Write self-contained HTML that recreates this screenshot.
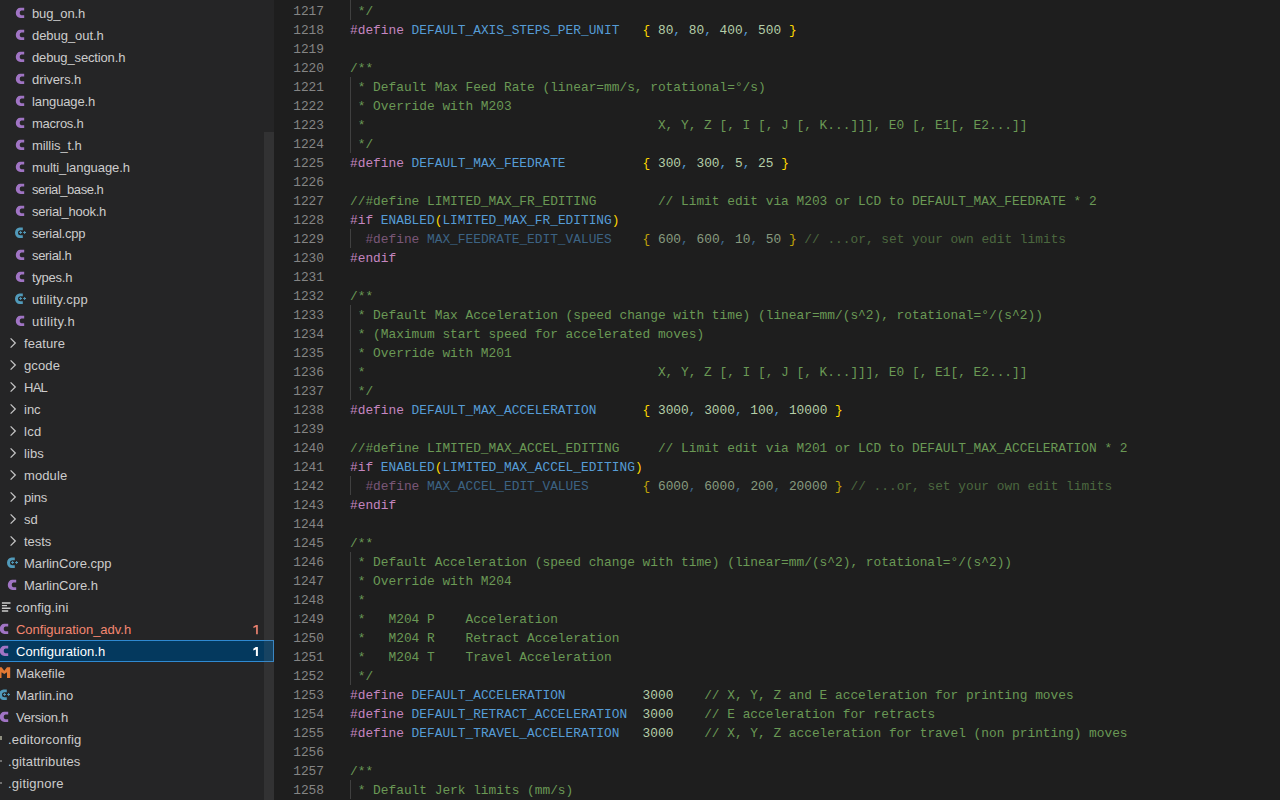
<!DOCTYPE html>
<html><head><meta charset="utf-8"><style>
*{margin:0;padding:0;box-sizing:border-box}
html,body{width:1280px;height:800px;overflow:hidden;background:#1e1e1e}
#side{position:absolute;left:0;top:0;width:274px;height:800px;background:#252526;overflow:hidden}
.fn{position:absolute;height:22px;line-height:22px;font-family:"Liberation Sans",sans-serif;font-size:13px;color:#cccccc;white-space:pre}
.fn.err{color:#f48771}
.fn.selt{color:#ffffff}
.sel{position:absolute;left:0;width:274px;height:22px;background:#04395e;border:1px solid #2f8ad2;border-left:none}
.badge{position:absolute;left:248px;width:14px;height:22px;line-height:22px;text-align:center;font-family:"Liberation Sans",sans-serif;font-size:12px}
.ic{position:absolute}
.ic-c{position:absolute;width:12px;height:22px;line-height:22px;font-family:"Liberation Sans",sans-serif;font-weight:bold;font-size:14px;color:#a074c4}
.ic-m{position:absolute;width:12px;height:22px;line-height:22px;font-family:"Liberation Sans",sans-serif;font-weight:bold;font-size:13px;color:#e37933}
#thumb{position:absolute;left:264px;top:132px;width:10px;height:668px;background:rgba(121,121,121,0.17)}
#ed{position:absolute;left:274px;top:0;width:1006px;height:800px;background:#1e1e1e;overflow:hidden}
.ln{position:absolute;left:0;width:50px;height:19px;line-height:19px;padding-top:1px;text-align:right;font-family:"Liberation Mono",monospace;font-size:12.84px;color:#858585;white-space:pre}
.cl{position:absolute;left:76px;height:19px;line-height:19px;padding-top:1px;font-family:"Liberation Mono",monospace;font-size:12.84px;color:#d4d4d4;white-space:pre}
.ig{position:absolute;left:76px;width:1px;height:19px;background:#404040}
.pp{color:#c586c0}.mac{color:#569cd6}.num{color:#b5cea8}.br{color:#ffd700}.cm{color:#6a9955}.tx{color:#d4d4d4}.co{color:#569cd6}
.ppd{color:#c586c0;opacity:.55}.macd{color:#569cd6;opacity:.55}.numd{color:#b5cea8;opacity:.7}.brd{color:#ffd700;opacity:.72}.cod{color:#569cd6;opacity:.6}.cmd{color:#6a9955;opacity:.6}
</style></head>
<body>
<div id="side">
<svg class="ic" style="left:14px;top:2px" width="14" height="22" viewBox="0 0 14 22"><path d="M10.2 5.8 H6.4 A4.6 5.1 0 0 0 6.4 16 H10.2 V13.2 H7.4 A2.4 2.4 0 0 1 7.4 8.6 H10.2 Z" fill="#a074c4"/></svg><div class="fn" style="left:32px;top:3px;letter-spacing:-0.143px">bug_on.h</div><svg class="ic" style="left:14px;top:24px" width="14" height="22" viewBox="0 0 14 22"><path d="M10.2 5.8 H6.4 A4.6 5.1 0 0 0 6.4 16 H10.2 V13.2 H7.4 A2.4 2.4 0 0 1 7.4 8.6 H10.2 Z" fill="#a074c4"/></svg><div class="fn" style="left:32px;top:25px;letter-spacing:-0.050px">debug_out.h</div><svg class="ic" style="left:14px;top:46px" width="14" height="22" viewBox="0 0 14 22"><path d="M10.2 5.8 H6.4 A4.6 5.1 0 0 0 6.4 16 H10.2 V13.2 H7.4 A2.4 2.4 0 0 1 7.4 8.6 H10.2 Z" fill="#a074c4"/></svg><div class="fn" style="left:32px;top:47px;letter-spacing:-0.143px">debug_section.h</div><svg class="ic" style="left:14px;top:68px" width="14" height="22" viewBox="0 0 14 22"><path d="M10.2 5.8 H6.4 A4.6 5.1 0 0 0 6.4 16 H10.2 V13.2 H7.4 A2.4 2.4 0 0 1 7.4 8.6 H10.2 Z" fill="#a074c4"/></svg><div class="fn" style="left:32px;top:69px;letter-spacing:-0.062px">drivers.h</div><svg class="ic" style="left:14px;top:90px" width="14" height="22" viewBox="0 0 14 22"><path d="M10.2 5.8 H6.4 A4.6 5.1 0 0 0 6.4 16 H10.2 V13.2 H7.4 A2.4 2.4 0 0 1 7.4 8.6 H10.2 Z" fill="#a074c4"/></svg><div class="fn" style="left:32px;top:91px;letter-spacing:-0.111px">language.h</div><svg class="ic" style="left:14px;top:112px" width="14" height="22" viewBox="0 0 14 22"><path d="M10.2 5.8 H6.4 A4.6 5.1 0 0 0 6.4 16 H10.2 V13.2 H7.4 A2.4 2.4 0 0 1 7.4 8.6 H10.2 Z" fill="#a074c4"/></svg><div class="fn" style="left:32px;top:113px;letter-spacing:-0.250px">macros.h</div><svg class="ic" style="left:14px;top:134px" width="14" height="22" viewBox="0 0 14 22"><path d="M10.2 5.8 H6.4 A4.6 5.1 0 0 0 6.4 16 H10.2 V13.2 H7.4 A2.4 2.4 0 0 1 7.4 8.6 H10.2 Z" fill="#a074c4"/></svg><div class="fn" style="left:32px;top:135px;letter-spacing:-0.083px">millis_t.h</div><svg class="ic" style="left:14px;top:156px" width="14" height="22" viewBox="0 0 14 22"><path d="M10.2 5.8 H6.4 A4.6 5.1 0 0 0 6.4 16 H10.2 V13.2 H7.4 A2.4 2.4 0 0 1 7.4 8.6 H10.2 Z" fill="#a074c4"/></svg><div class="fn" style="left:32px;top:157px;letter-spacing:-0.067px">multi_language.h</div><svg class="ic" style="left:14px;top:178px" width="14" height="22" viewBox="0 0 14 22"><path d="M10.2 5.8 H6.4 A4.6 5.1 0 0 0 6.4 16 H10.2 V13.2 H7.4 A2.4 2.4 0 0 1 7.4 8.6 H10.2 Z" fill="#a074c4"/></svg><div class="fn" style="left:32px;top:179px;letter-spacing:-0.458px">serial_base.h</div><svg class="ic" style="left:14px;top:200px" width="14" height="22" viewBox="0 0 14 22"><path d="M10.2 5.8 H6.4 A4.6 5.1 0 0 0 6.4 16 H10.2 V13.2 H7.4 A2.4 2.4 0 0 1 7.4 8.6 H10.2 Z" fill="#a074c4"/></svg><div class="fn" style="left:32px;top:201px;letter-spacing:-0.250px">serial_hook.h</div><svg class="ic" style="left:14px;top:222px" width="14" height="22" viewBox="0 0 14 22"><path d="M8.8 5.5 H5.6 A4.6 5.25 0 0 0 5.6 16 H8.8 V13.3 H6.6 A2.6 2.5 0 0 1 6.6 8.3 H8.8 Z" fill="#519aba"/><path d="M5.2 10.5 H8.0 M6.6 9.1 V11.9 M9.2 10.5 H12.0 M10.6 9.1 V11.9" fill="none" stroke="#519aba" stroke-width="1.0"/></svg><div class="fn" style="left:32px;top:223px;letter-spacing:-0.250px">serial.cpp</div><svg class="ic" style="left:14px;top:244px" width="14" height="22" viewBox="0 0 14 22"><path d="M10.2 5.8 H6.4 A4.6 5.1 0 0 0 6.4 16 H10.2 V13.2 H7.4 A2.4 2.4 0 0 1 7.4 8.6 H10.2 Z" fill="#a074c4"/></svg><div class="fn" style="left:32px;top:245px;letter-spacing:-0.321px">serial.h</div><svg class="ic" style="left:14px;top:266px" width="14" height="22" viewBox="0 0 14 22"><path d="M10.2 5.8 H6.4 A4.6 5.1 0 0 0 6.4 16 H10.2 V13.2 H7.4 A2.4 2.4 0 0 1 7.4 8.6 H10.2 Z" fill="#a074c4"/></svg><div class="fn" style="left:32px;top:267px;letter-spacing:-0.250px">types.h</div><svg class="ic" style="left:14px;top:288px" width="14" height="22" viewBox="0 0 14 22"><path d="M8.8 5.5 H5.6 A4.6 5.25 0 0 0 5.6 16 H8.8 V13.3 H6.6 A2.6 2.5 0 0 1 6.6 8.3 H8.8 Z" fill="#519aba"/><path d="M5.2 10.5 H8.0 M6.6 9.1 V11.9 M9.2 10.5 H12.0 M10.6 9.1 V11.9" fill="none" stroke="#519aba" stroke-width="1.0"/></svg><div class="fn" style="left:32px;top:289px;letter-spacing:0.250px">utility.cpp</div><svg class="ic" style="left:14px;top:310px" width="14" height="22" viewBox="0 0 14 22"><path d="M10.2 5.8 H6.4 A4.6 5.1 0 0 0 6.4 16 H10.2 V13.2 H7.4 A2.4 2.4 0 0 1 7.4 8.6 H10.2 Z" fill="#a074c4"/></svg><div class="fn" style="left:32px;top:311px;letter-spacing:0.406px">utility.h</div><svg class="ic" style="left:8px;top:332px" width="16" height="22" viewBox="0 0 16 22"><path d="M2.6 6.4 L7.3 11 L2.6 15.6" fill="none" stroke="#c5c5c5" stroke-width="1.25"/></svg><div class="fn" style="left:24px;top:333px;letter-spacing:0.083px">feature</div><svg class="ic" style="left:8px;top:354px" width="16" height="22" viewBox="0 0 16 22"><path d="M2.6 6.4 L7.3 11 L2.6 15.6" fill="none" stroke="#c5c5c5" stroke-width="1.25"/></svg><div class="fn" style="left:24px;top:355px;letter-spacing:0.125px">gcode</div><svg class="ic" style="left:8px;top:376px" width="16" height="22" viewBox="0 0 16 22"><path d="M2.6 6.4 L7.3 11 L2.6 15.6" fill="none" stroke="#c5c5c5" stroke-width="1.25"/></svg><div class="fn" style="left:24px;top:377px;letter-spacing:-0.750px">HAL</div><svg class="ic" style="left:8px;top:398px" width="16" height="22" viewBox="0 0 16 22"><path d="M2.6 6.4 L7.3 11 L2.6 15.6" fill="none" stroke="#c5c5c5" stroke-width="1.25"/></svg><div class="fn" style="left:24px;top:399px;letter-spacing:0.000px">inc</div><svg class="ic" style="left:8px;top:420px" width="16" height="22" viewBox="0 0 16 22"><path d="M2.6 6.4 L7.3 11 L2.6 15.6" fill="none" stroke="#c5c5c5" stroke-width="1.25"/></svg><div class="fn" style="left:24px;top:421px;letter-spacing:0.250px">lcd</div><svg class="ic" style="left:8px;top:442px" width="16" height="22" viewBox="0 0 16 22"><path d="M2.6 6.4 L7.3 11 L2.6 15.6" fill="none" stroke="#c5c5c5" stroke-width="1.25"/></svg><div class="fn" style="left:24px;top:443px;letter-spacing:0.083px">libs</div><svg class="ic" style="left:8px;top:464px" width="16" height="22" viewBox="0 0 16 22"><path d="M2.6 6.4 L7.3 11 L2.6 15.6" fill="none" stroke="#c5c5c5" stroke-width="1.25"/></svg><div class="fn" style="left:24px;top:465px;letter-spacing:0.100px">module</div><svg class="ic" style="left:8px;top:486px" width="16" height="22" viewBox="0 0 16 22"><path d="M2.6 6.4 L7.3 11 L2.6 15.6" fill="none" stroke="#c5c5c5" stroke-width="1.25"/></svg><div class="fn" style="left:24px;top:487px;letter-spacing:-0.167px">pins</div><svg class="ic" style="left:8px;top:508px" width="16" height="22" viewBox="0 0 16 22"><path d="M2.6 6.4 L7.3 11 L2.6 15.6" fill="none" stroke="#c5c5c5" stroke-width="1.25"/></svg><div class="fn" style="left:24px;top:509px;letter-spacing:0.000px">sd</div><svg class="ic" style="left:8px;top:530px" width="16" height="22" viewBox="0 0 16 22"><path d="M2.6 6.4 L7.3 11 L2.6 15.6" fill="none" stroke="#c5c5c5" stroke-width="1.25"/></svg><div class="fn" style="left:24px;top:531px;letter-spacing:-0.062px">tests</div><svg class="ic" style="left:6px;top:552px" width="14" height="22" viewBox="0 0 14 22"><path d="M8.8 5.5 H5.6 A4.6 5.25 0 0 0 5.6 16 H8.8 V13.3 H6.6 A2.6 2.5 0 0 1 6.6 8.3 H8.8 Z" fill="#519aba"/><path d="M5.2 10.5 H8.0 M6.6 9.1 V11.9 M9.2 10.5 H12.0 M10.6 9.1 V11.9" fill="none" stroke="#519aba" stroke-width="1.0"/></svg><div class="fn" style="left:24px;top:553px;letter-spacing:-0.058px">MarlinCore.cpp</div><svg class="ic" style="left:6px;top:574px" width="14" height="22" viewBox="0 0 14 22"><path d="M10.2 5.8 H6.4 A4.6 5.1 0 0 0 6.4 16 H10.2 V13.2 H7.4 A2.4 2.4 0 0 1 7.4 8.6 H10.2 Z" fill="#a074c4"/></svg><div class="fn" style="left:24px;top:575px;letter-spacing:-0.045px">MarlinCore.h</div><svg class="ic" style="left:-2px;top:596px" width="14" height="22" viewBox="0 0 14 22"><path d="M3.9 7.0 H12.5 M3.9 9.6 H9.0 M3.9 12.3 H12.5 M3.9 15.0 H10.2" fill="none" stroke="#cccccc" stroke-width="1.4"/></svg><div class="fn" style="left:16px;top:597px;letter-spacing:0.111px">config.ini</div><svg class="ic" style="left:-2px;top:618px" width="14" height="22" viewBox="0 0 14 22"><path d="M10.2 5.8 H6.4 A4.6 5.1 0 0 0 6.4 16 H10.2 V13.2 H7.4 A2.4 2.4 0 0 1 7.4 8.6 H10.2 Z" fill="#a074c4"/></svg><div class="fn err" style="left:16px;top:619px;letter-spacing:-0.014px">Configuration_adv.h</div><svg class="ic" style="left:248px;top:618px" width="14" height="22" viewBox="0 0 14 22"><path d="M8.1 6.9 H9.8 V16.2 H8.1 V9.0 L5.4 10.0 V8.4 Z" fill="#e8806e"/></svg><div class="sel" style="top:640px"></div><svg class="ic" style="left:-2px;top:640px" width="14" height="22" viewBox="0 0 14 22"><path d="M10.2 5.8 H6.4 A4.6 5.1 0 0 0 6.4 16 H10.2 V13.2 H7.4 A2.4 2.4 0 0 1 7.4 8.6 H10.2 Z" fill="#a074c4"/></svg><div class="fn selt" style="left:16px;top:641px;letter-spacing:0.071px">Configuration.h</div><svg class="ic" style="left:248px;top:640px" width="14" height="22" viewBox="0 0 14 22"><path d="M7.8 7.1 H9.9 V16.0 H7.9 V9.6 L5.3 10.6 V8.7 Z" fill="#ffffff"/></svg><svg class="ic" style="left:-2px;top:662px" width="14" height="22" viewBox="0 0 14 22"><path d="M0.4 16.1 V5.2 H3.6 L6.3 8.8 L9.0 5.2 H12.2 V16.1 H9.0 V10.2 L6.3 12.0 L3.5 10.2 V16.1 Z" fill="#e37933"/></svg><div class="fn" style="left:16px;top:663px;letter-spacing:0.071px">Makefile</div><svg class="ic" style="left:-2px;top:684px" width="14" height="22" viewBox="0 0 14 22"><path d="M8.8 5.5 H5.6 A4.6 5.25 0 0 0 5.6 16 H8.8 V13.3 H6.6 A2.6 2.5 0 0 1 6.6 8.3 H8.8 Z" fill="#519aba"/><path d="M5.2 10.5 H8.0 M6.6 9.1 V11.9 M9.2 10.5 H12.0 M10.6 9.1 V11.9" fill="none" stroke="#519aba" stroke-width="1.0"/></svg><div class="fn" style="left:16px;top:685px;letter-spacing:0.111px">Marlin.ino</div><svg class="ic" style="left:-2px;top:706px" width="14" height="22" viewBox="0 0 14 22"><path d="M10.2 5.8 H6.4 A4.6 5.1 0 0 0 6.4 16 H10.2 V13.2 H7.4 A2.4 2.4 0 0 1 7.4 8.6 H10.2 Z" fill="#a074c4"/></svg><div class="fn" style="left:16px;top:707px;letter-spacing:-0.250px">Version.h</div><div class="ic" style="left:0px;top:736px;width:2px;height:4px;background:#8f8f80"></div><div class="fn" style="left:8px;top:729px;letter-spacing:0.208px">.editorconfig</div><div class="ic" style="left:0px;top:760px;width:2px;height:2px;background:#707070"></div><div class="fn" style="left:8px;top:751px;letter-spacing:0.115px">.gitattributes</div><div class="ic" style="left:0px;top:782px;width:2px;height:2px;background:#707070"></div><div class="fn" style="left:8px;top:773px;letter-spacing:0.222px">.gitignore</div>
<div id="thumb"></div>
</div>
<div id="ed">
<div class="ln" style="top:1px">1217</div><div class="cl" style="top:1px"><span class="cm"> */</span></div><div class="ig" style="top:0px;height:20px"></div><div class="ln" style="top:20px">1218</div><div class="cl" style="top:20px"><span class="pp">#define</span><span class="tx"> </span><span class="mac">DEFAULT_AXIS_STEPS_PER_UNIT   </span><span class="br">{ </span><span class="num">80</span><span class="co">, </span><span class="num">80</span><span class="co">, </span><span class="num">400</span><span class="co">, </span><span class="num">500</span><span class="br"> }</span></div><div class="ln" style="top:39px">1219</div><div class="cl" style="top:39px"></div><div class="ln" style="top:58px">1220</div><div class="cl" style="top:58px"><span class="cm">/**</span></div><div class="ln" style="top:77px">1221</div><div class="cl" style="top:77px"><span class="cm"> * Default Max Feed Rate (linear=mm/s, rotational=°/s)</span></div><div class="ig" style="top:77px;height:19px"></div><div class="ln" style="top:96px">1222</div><div class="cl" style="top:96px"><span class="cm"> * Override with M203</span></div><div class="ig" style="top:96px;height:19px"></div><div class="ln" style="top:115px">1223</div><div class="cl" style="top:115px"><span class="cm"> *                                      X, Y, Z [, I [, J [, K...]]], E0 [, E1[, E2...]]</span></div><div class="ig" style="top:115px;height:19px"></div><div class="ln" style="top:134px">1224</div><div class="cl" style="top:134px"><span class="cm"> */</span></div><div class="ig" style="top:134px;height:19px"></div><div class="ln" style="top:153px">1225</div><div class="cl" style="top:153px"><span class="pp">#define</span><span class="tx"> </span><span class="mac">DEFAULT_MAX_FEEDRATE          </span><span class="br">{ </span><span class="num">300</span><span class="co">, </span><span class="num">300</span><span class="co">, </span><span class="num">5</span><span class="co">, </span><span class="num">25</span><span class="br"> }</span></div><div class="ln" style="top:172px">1226</div><div class="cl" style="top:172px"></div><div class="ln" style="top:191px">1227</div><div class="cl" style="top:191px"><span class="cm">//#define LIMITED_MAX_FR_EDITING        // Limit edit via M203 or LCD to DEFAULT_MAX_FEEDRATE * 2</span></div><div class="ln" style="top:210px">1228</div><div class="cl" style="top:210px"><span class="pp">#if</span><span class="tx"> </span><span class="mac">ENABLED</span><span class="br">(</span><span class="mac">LIMITED_MAX_FR_EDITING</span><span class="br">)</span></div><div class="ln" style="top:229px">1229</div><div class="cl" style="top:229px"><span class="tx">  </span><span class="ppd">#define</span><span class="tx"> </span><span class="macd">MAX_FEEDRATE_EDIT_VALUES    </span><span class="brd">{ </span><span class="numd">600</span><span class="cod">, </span><span class="numd">600</span><span class="cod">, </span><span class="numd">10</span><span class="cod">, </span><span class="numd">50</span><span class="brd"> }</span><span class="cmd"> // ...or, set your own edit limits</span></div><div class="ig" style="top:229px;height:19px"></div><div class="ln" style="top:248px">1230</div><div class="cl" style="top:248px"><span class="pp">#endif</span></div><div class="ln" style="top:267px">1231</div><div class="cl" style="top:267px"></div><div class="ln" style="top:286px">1232</div><div class="cl" style="top:286px"><span class="cm">/**</span></div><div class="ln" style="top:305px">1233</div><div class="cl" style="top:305px"><span class="cm"> * Default Max Acceleration (speed change with time) (linear=mm/(s^2), rotational=°/(s^2))</span></div><div class="ig" style="top:305px;height:19px"></div><div class="ln" style="top:324px">1234</div><div class="cl" style="top:324px"><span class="cm"> * (Maximum start speed for accelerated moves)</span></div><div class="ig" style="top:324px;height:19px"></div><div class="ln" style="top:343px">1235</div><div class="cl" style="top:343px"><span class="cm"> * Override with M201</span></div><div class="ig" style="top:343px;height:19px"></div><div class="ln" style="top:362px">1236</div><div class="cl" style="top:362px"><span class="cm"> *                                      X, Y, Z [, I [, J [, K...]]], E0 [, E1[, E2...]]</span></div><div class="ig" style="top:362px;height:19px"></div><div class="ln" style="top:381px">1237</div><div class="cl" style="top:381px"><span class="cm"> */</span></div><div class="ig" style="top:381px;height:19px"></div><div class="ln" style="top:400px">1238</div><div class="cl" style="top:400px"><span class="pp">#define</span><span class="tx"> </span><span class="mac">DEFAULT_MAX_ACCELERATION      </span><span class="br">{ </span><span class="num">3000</span><span class="co">, </span><span class="num">3000</span><span class="co">, </span><span class="num">100</span><span class="co">, </span><span class="num">10000</span><span class="br"> }</span></div><div class="ln" style="top:419px">1239</div><div class="cl" style="top:419px"></div><div class="ln" style="top:438px">1240</div><div class="cl" style="top:438px"><span class="cm">//#define LIMITED_MAX_ACCEL_EDITING     // Limit edit via M201 or LCD to DEFAULT_MAX_ACCELERATION * 2</span></div><div class="ln" style="top:457px">1241</div><div class="cl" style="top:457px"><span class="pp">#if</span><span class="tx"> </span><span class="mac">ENABLED</span><span class="br">(</span><span class="mac">LIMITED_MAX_ACCEL_EDITING</span><span class="br">)</span></div><div class="ln" style="top:476px">1242</div><div class="cl" style="top:476px"><span class="tx">  </span><span class="ppd">#define</span><span class="tx"> </span><span class="macd">MAX_ACCEL_EDIT_VALUES       </span><span class="brd">{ </span><span class="numd">6000</span><span class="cod">, </span><span class="numd">6000</span><span class="cod">, </span><span class="numd">200</span><span class="cod">, </span><span class="numd">20000</span><span class="brd"> }</span><span class="cmd"> // ...or, set your own edit limits</span></div><div class="ig" style="top:476px;height:19px"></div><div class="ln" style="top:495px">1243</div><div class="cl" style="top:495px"><span class="pp">#endif</span></div><div class="ln" style="top:514px">1244</div><div class="cl" style="top:514px"></div><div class="ln" style="top:533px">1245</div><div class="cl" style="top:533px"><span class="cm">/**</span></div><div class="ln" style="top:552px">1246</div><div class="cl" style="top:552px"><span class="cm"> * Default Acceleration (speed change with time) (linear=mm/(s^2), rotational=°/(s^2))</span></div><div class="ig" style="top:552px;height:19px"></div><div class="ln" style="top:571px">1247</div><div class="cl" style="top:571px"><span class="cm"> * Override with M204</span></div><div class="ig" style="top:571px;height:19px"></div><div class="ln" style="top:590px">1248</div><div class="cl" style="top:590px"><span class="cm"> *</span></div><div class="ig" style="top:590px;height:19px"></div><div class="ln" style="top:609px">1249</div><div class="cl" style="top:609px"><span class="cm"> *   M204 P    Acceleration</span></div><div class="ig" style="top:609px;height:19px"></div><div class="ln" style="top:628px">1250</div><div class="cl" style="top:628px"><span class="cm"> *   M204 R    Retract Acceleration</span></div><div class="ig" style="top:628px;height:19px"></div><div class="ln" style="top:647px">1251</div><div class="cl" style="top:647px"><span class="cm"> *   M204 T    Travel Acceleration</span></div><div class="ig" style="top:647px;height:19px"></div><div class="ln" style="top:666px">1252</div><div class="cl" style="top:666px"><span class="cm"> */</span></div><div class="ig" style="top:666px;height:19px"></div><div class="ln" style="top:685px">1253</div><div class="cl" style="top:685px"><span class="pp">#define</span><span class="tx"> </span><span class="mac">DEFAULT_ACCELERATION          </span><span class="num">3000</span><span class="tx">    </span><span class="cm">// X, Y, Z and E acceleration for printing moves</span></div><div class="ln" style="top:704px">1254</div><div class="cl" style="top:704px"><span class="pp">#define</span><span class="tx"> </span><span class="mac">DEFAULT_RETRACT_ACCELERATION  </span><span class="num">3000</span><span class="tx">    </span><span class="cm">// E acceleration for retracts</span></div><div class="ln" style="top:723px">1255</div><div class="cl" style="top:723px"><span class="pp">#define</span><span class="tx"> </span><span class="mac">DEFAULT_TRAVEL_ACCELERATION   </span><span class="num">3000</span><span class="tx">    </span><span class="cm">// X, Y, Z acceleration for travel (non printing) moves</span></div><div class="ln" style="top:742px">1256</div><div class="cl" style="top:742px"></div><div class="ln" style="top:761px">1257</div><div class="cl" style="top:761px"><span class="cm">/**</span></div><div class="ln" style="top:780px">1258</div><div class="cl" style="top:780px"><span class="cm"> * Default Jerk limits (mm/s)</span></div><div class="ig" style="top:780px;height:19px"></div>
</div>
</body></html>
